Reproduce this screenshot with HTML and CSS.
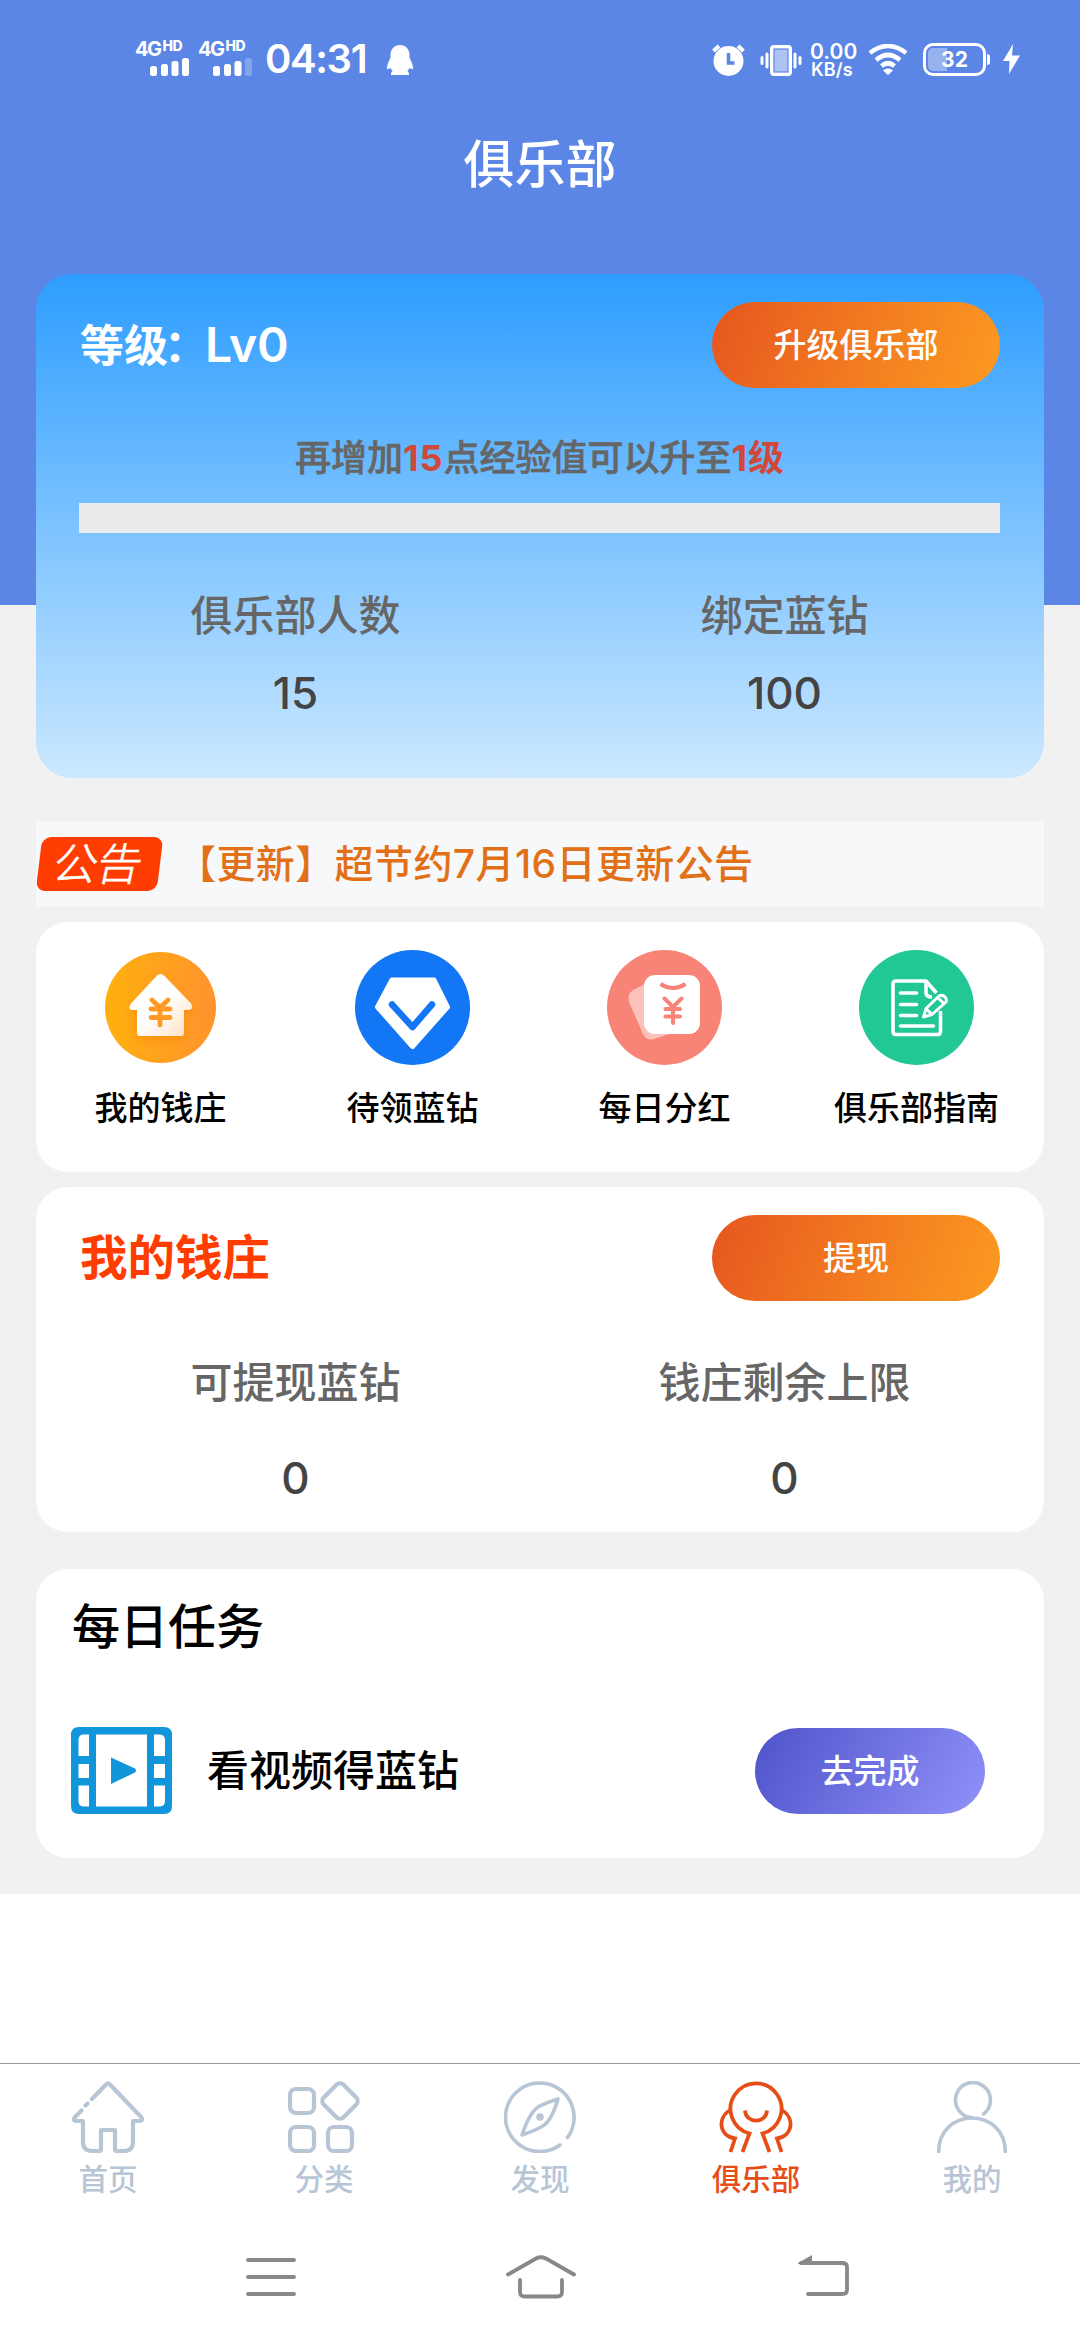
FILE: index.html
```html
<!DOCTYPE html>
<html lang="zh-CN">
<head>
<meta charset="utf-8">
<title>俱乐部</title>
<link rel="stylesheet" href="styles.css">
</head>
<body>
<div class="phone">
  <main class="page">
    <div class="status">
      <div class="status-left">
        <div class="signal">
          <div class="net">4G<sup>HD</sup></div>
          <svg class="bars" width="40" height="18" viewBox="0 0 40 18"><rect x="0" y="8" width="7" height="10" rx="2.5"/><rect x="11" y="6" width="7" height="12" rx="2.5"/><rect x="21.500" y="3" width="7" height="15" rx="2.500"/><rect x="32" y="0" width="7" height="18" rx="2.500"/></svg>
        </div>
        <div class="signal">
          <div class="net">4G<sup>HD</sup></div>
          <svg class="bars" width="40" height="18" viewBox="0 0 40 18"><rect x="0" y="8" width="7" height="10" rx="2.500"/><rect x="11" y="6" width="7" height="12" rx="2.500"/><rect x="21.500" y="3" width="7" height="15" rx="2.500"/><rect x="32" y="0" width="7" height="18" rx="2.500" opacity=".25"/></svg>
        </div>
        <div class="clock">04:31</div>
        <svg class="penguin" width="26" height="30" viewBox="0 0 26 30"><path d="M13 0C7.500 0 3.500 4 3.500 10L3.500 13C1.500 16 0 20 0 24.500L3.500 23L5.500 26.500L4 28V30H22V28L20.500 26.500L22.500 23L26 24.500C26 20 24.500 16 22.500 13V10C22.500 4 18.500 0 13 0Z"/></svg>
      </div>
      <div class="status-right">
        <svg width="33" height="33" viewBox="0 0 33 33"><circle cx="16.500" cy="18" r="15"/><path d="M1.500 8L7 3M31.500 8L26 3" stroke="#fff" stroke-width="4"/><path d="M16.500 10V20H22.500" fill="none" stroke="#5b86e5" stroke-width="3.500"/></svg>
        <svg class="vibrate" width="42" height="31" viewBox="0 0 42 31"><rect x="12" y="2" width="18" height="27" rx="2" fill="#adc3f2" stroke="#fff" stroke-width="4"/><rect x="14" y="4" width="14" height="23" fill="none" stroke="#5b86e5" stroke-width="1.200"/><path d="M7 9V22M35 9V22M2 12.500V18.500M40 12.500V18.500" stroke="#fff" stroke-width="3" stroke-linecap="round"/></svg>
        <div class="speed"><span>0.00</span><span>KB/s</span></div>
        <svg class="wifi" width="40" height="31" viewBox="0 0 40 31"><path d="M2 9Q20-5 38 9M8 16Q20 6 32 16M13.500 22Q20 16.500 26.500 22" fill="none" stroke="#fff" stroke-width="4.600"/><path d="M15 26.500Q20 22.500 25 26.500L20 31Z"/></svg>
        <div class="battery"><span>32</span></div>
        <svg class="bolt" width="17" height="30" viewBox="0 0 17 30"><path d="M10 0L0 17H6.500L6 30L17 11.500H9Z"/></svg>
      </div>
    </div>
    <h1 class="title">俱乐部</h1>

    <section class="card level">
      <div class="card-head">
        <div class="level-name">等级<span class="colon">：</span><span class="lv">Lv0</span></div>
        <button class="pill orange">升级俱乐部</button>
      </div>
      <p class="hint">再增加<em>15</em>点经验值可以升至<em>1级</em></p>
      <div class="progress"></div>
      <div class="stats">
        <div class="stat"><span class="stat-label">俱乐部人数</span><span class="stat-value">15</span></div>
        <div class="stat"><span class="stat-label">绑定蓝钻</span><span class="stat-value">100</span></div>
      </div>
    </section>

    <section class="notice">
      <div class="badge"><span>公告</span></div>
      <p class="notice-text">【更新】超节约7月16日更新公告</p>
    </section>

    <section class="card shortcuts">
      <div class="shortcut">
        <div class="shortcut-icon">
          <svg width="111" height="111" viewBox="0 0 111 111">
            <defs><linearGradient id="gold"><stop offset="0" stop-color="#ffb00e"/><stop offset="1" stop-color="#ff932e"/></linearGradient><linearGradient id="house" x1="0" y1="0" x2="1" y2="1"><stop offset=".5" stop-color="#fff"/><stop offset="1" stop-color="#ffdfc0"/></linearGradient><filter id="soft" x="-30%" y="-30%" width="160%" height="160%"><feDropShadow dx="0" dy="4" stdDeviation="4" flood-color="#f57c00" flood-opacity=".45"/></filter></defs>
            <circle cx="55.500" cy="55.500" r="55.500" fill="url(#gold)"/>
            <path d="M52 23.500Q55.500 20.500 59 23.500L86 51.500Q89 57.500 83 58H79V81Q79 84 76 84H35Q32 84 32 81V58H28Q22 57.500 26 51.500Z" fill="url(#house)" filter="url(#soft)"/>
            <path d="M47 48L55 55.500L63 48M55 55V73M46 57H65M46 65.500H65" fill="none" stroke="#ff9a26" stroke-width="4.800" stroke-linecap="round" stroke-linejoin="round"/>
          </svg>
        </div>
        <span>我的钱庄</span>
      </div>
      <div class="shortcut">
        <div class="shortcut-icon">
          <svg width="115" height="115" viewBox="0 0 115 115"><circle cx="57.500" cy="57.500" r="57.500" fill="#1376f5"/><path d="M37 30H79L92.500 57L57.500 96.500L22.500 57Z" fill="#fff" stroke="#fff" stroke-width="5" stroke-linejoin="round"/><path d="M37 54.500L57.500 77L77 54.500" fill="none" stroke="#1376f5" stroke-width="6.500" stroke-linecap="round" stroke-linejoin="round"/></svg>
        </div>
        <span>待领蓝钻</span>
      </div>
      <div class="shortcut">
        <div class="shortcut-icon">
          <svg width="115" height="115" viewBox="0 0 115 115"><circle cx="57.500" cy="57.500" r="57.500" fill="#f78477"/><path d="M38 34L28 39Q19 43 22.500 53L36 84Q39 91 47 89L62 84Z" fill="#fbc1bb"/><rect x="37" y="25" width="56" height="59" rx="11" fill="#fff"/><path d="M53.500 34Q66 42 78.500 34" fill="none" stroke="#f78477" stroke-width="4"/><path d="M57.500 48.500L66 57L74.500 48.500M66 57V73M58.500 59H73M58.500 66.500H73" fill="none" stroke="#f78477" stroke-width="4" stroke-linecap="round"/></svg>
        </div>
        <span>每日分红</span>
      </div>
      <div class="shortcut">
        <div class="shortcut-icon">
          <svg width="115" height="115" viewBox="0 0 115 115"><circle cx="57.500" cy="57.500" r="57.500" fill="#22c796"/><g fill="none" stroke="#fff" stroke-width="3.600" stroke-linejoin="round"><path d="M77.500 43L67 31H37Q34 31 34 34V81Q34 84.500 37 84.500H79Q81.500 84.500 81.500 81V61"/><path d="M67 31V43Q67.500 47 73 47"/><path d="M41.500 43H57.500M41.500 54.500H57.500M41.500 65.500H57.500M41.500 76H74.500" stroke-linecap="round"/><path d="M64.500 67L67 58.500L80 46Q83 44.500 85.500 46.500Q88.500 49 87 52L73 64.500ZM67 58.500L73 64.500M78.500 47.500L85 53.500" stroke-width="3"/></g></svg>
        </div>
        <span>俱乐部指南</span>
      </div>
    </section>

    <section class="card bank">
      <div class="card-head">
        <h2 class="bank-title">我的钱庄</h2>
        <button class="pill orange">提现</button>
      </div>
      <div class="stats">
        <div class="stat"><span class="stat-label">可提现蓝钻</span><span class="stat-value">0</span></div>
        <div class="stat"><span class="stat-label">钱庄剩余上限</span><span class="stat-value">0</span></div>
      </div>
    </section>

    <section class="card tasks">
      <h2 class="tasks-title">每日任务</h2>
      <div class="task">
        <svg width="101" height="87" viewBox="0 0 101 87"><path fill="#1296db" fill-rule="evenodd" d="M8 0H93Q101 0 101 8V79Q101 87 93 87H8Q0 87 0 79V8Q0 0 8 0ZM25 7.500V79.500H76V7.500ZM18 7.500H12Q7.500 8 7.500 13V29H18ZM7.500 37V51H18V37ZM7.500 58.500V74Q7.500 79 12 79.500H18V58.500ZM83 7.500V29H94V13Q94 8 89 7.500ZM83 37V51H94V37ZM83 58.500V79.500H89Q94 79 94 74V58.500Z"/><path d="M40 30.500L64 41.500Q66 43.500 64 45.500L40 57Z" fill="#1296db"/></svg>
        <span class="task-name">看视频得蓝钻</span>
        <button class="pill violet">去完成</button>
      </div>
    </section>
  </main>

  <nav class="tabs">
    <a class="tab"><svg viewBox="0 0 72 72"><path d="M20 18L34 3.500Q36 1 38 3.500L69.500 36.500Q71 39.500 68 40H61V61Q61 70 52 70H45Q43 70 43 68V49H29V68Q29 70 27 70H20Q11 70 11 61V40H4Q.500 39.500 3 36L9.500 29.500M13.500 24.500L15.500 22.500"/></svg><span>首页</span></a>
    <a class="tab"><svg viewBox="0 0 72 72"><rect x="2" y="8" width="24" height="24" rx="6"/><rect x="2" y="46" width="24" height="24" rx="6"/><rect x="40" y="46" width="24" height="24" rx="6"/><rect x="38" y="6" width="28" height="28" rx="5" transform="rotate(45 52 20)"/></svg><span>分类</span></a>
    <a class="tab"><svg viewBox="0 0 72 72" class="fine"><path d="M56 64A34.300 34.300 0 1 1 63.500 56.500"/><path d="M18 54C22 42 27 31 34 26Q41 22 54 18C50 31 46 41 38 45.500Q30 50 18 54Z"/><circle cx="36" cy="36" r="2" fill="#b7c5d5"/></svg><span>发现</span></a>
    <a class="tab active"><svg viewBox="0 0 72 72"><path d="M22.500 71L29.500 52.500A25.500 25.500 0 1 1 42.500 52.500L49.500 71"/><path d="M10 29C-3 37-1 55 15 57.500L10.500 71M62 29C75 37 73 55 57 57.500L61.500 71M25 29.500C26 43 46 43 47 29.500"/></svg><span>俱乐部</span></a>
    <a class="tab"><svg viewBox="0 0 72 72" class="fine"><path d="M2.700 70.500C2.700 50 18 37 36 37S69.300 50 69.300 70.500M36 36.500A17.500 17.500 0 1 1 47.500 33"/></svg><span>我的</span></a>
  </nav>

  <div class="system">
    <svg width="50" height="44" viewBox="0 0 50 44"><path d="M2 5H48M2 22H48M2 39H48"/></svg>
    <svg class="home" width="70" height="44" viewBox="0 0 70 44"><path d="M2 19.500L30 3.500Q35 1 40 3.500L68 19.500M14 25V37Q14 41.500 19 41.500H51Q56 41.500 56 37V25"/></svg>
    <svg width="52" height="44" viewBox="0 0 52 44"><path d="M3 8H44Q49 8 49 12V35Q49 39 44 39H10"/><path class="head" d="M0 8L14 0V9H0Z"/></svg>
  </div>
</div>
</body>
</html>
```
FILE: styles.css
```css
* { box-sizing: border-box; }
body {
  margin: 0;
  background: #fff;
  font-family: Inter, "Noto Sans CJK SC", sans-serif;
}
h1, h2, p { margin: 0; font-weight: 400; }
svg { display: block; flex: none; }
.phone { width: 1080px; height: 2340px; display: flex; flex-direction: column; }

.page {
  height: 1894px;
  padding: 0 36px;
  background: linear-gradient(#5b86e5 605px, #f1f1f1 605px);
}

.status { height: 120px; display: flex; justify-content: space-between; color: #fff; }
.status svg { fill: #fff; }
.status-left { display: flex; padding-left: 99px; }
.signal { width: 63px; padding-top: 41px; }
.net { height: 17px; font-size: 20px; font-weight: 700; line-height: 17px; letter-spacing: -1.5px; display: flex; }
.net sup { font-size: 14px; font-weight: 800; line-height: 10px; letter-spacing: -.5px; margin-left: 2px; }
.bars { margin-left: 15px; }
.clock { width: 126px; padding-left: 4px; font-size: 40px; font-weight: 600; line-height: 118px; letter-spacing: -1.4px; }
.penguin { margin-top: 45px; }
.status-right { display: flex; padding: 43px 24px 0 0; }
.vibrate { margin: 2px 0 0 15px; }
.speed { width: 48px; margin-left: 8px; display: flex; flex-direction: column; gap: 2px; font-weight: 600; font-size: 21px; line-height: 17px; letter-spacing: .1px; }
.speed span + span { font-size: 18px; line-height: 16px; padding-left: 1px; letter-spacing: .1px; }
.wifi { margin: 1px 0 0 10px; }
.battery {
  position: relative;
  width: 63px; height: 33px;
  margin-left: 15px;
  border: 3px solid #fff;
  border-radius: 10px;
  background: linear-gradient(90deg, #97b3ef 19px, transparent 19px) content-box;
  padding: 2px;
  font-size: 21px; font-weight: 700; line-height: 24px; text-align: center;
}
.battery::after {
  content: "";
  position: absolute; right: -7px; top: 8px;
  width: 3px; height: 11px;
  background: #fff;
  border-radius: 0 3px 3px 0;
}
.bolt { margin: 1px 0 0 17px; }

.title { height: 154px; line-height: 89px; text-align: center; font-size: 51px; font-weight: 500; color: #fff; }

.card { background: #fff; border-radius: 32px; }
.card-head { display: flex; align-items: center; justify-content: space-between; padding: 0 44px; }
.pill {
  width: 288px; height: 86px;
  border: 0; border-radius: 43px; padding: 0;
  color: #fff;
  font: 500 33px/86px Inter, "Noto Sans CJK SC", sans-serif;
}
.orange { background: linear-gradient(110deg, #e6561f, #f37d20 55%, #fc9a21); }
.violet { width: 230px; background: linear-gradient(120deg, #4f53c9, #9091fa); }

.level { height: 504px; padding-top: 28px; border-radius: 36px; background: linear-gradient(#2d9dff, #cbe8ff); }
.level-name { font-size: 44px; font-weight: 700; line-height: 60px; color: #fff; }
.colon { margin-left: -4px; }
.lv { font-size: 48px; font-weight: 600; margin-left: -3px; }
.hint { margin-top: 49px; font-size: 36px; font-weight: 500; line-height: 43px; text-align: center; color: #666; -webkit-text-stroke: .6px #666; }
.hint em { font-style: normal; font-weight: 700; letter-spacing: 1px; color: #d0483a; -webkit-text-stroke: 0; }
.progress { height: 30px; margin: 23px 44px 0 43px; background: #ebebeb; }
.stats { display: flex; padding: 0 15px; margin-top: 58px; }
.stat { flex: 1; display: flex; flex-direction: column; align-items: center; gap: 26px; }
.stat-label { font-size: 42px; font-weight: 500; line-height: 50px; color: #666; }
.stat-value { font-size: 44px; font-weight: 500; line-height: 52px; color: #444; }

.notice { height: 86px; margin: 43px 0 15px; display: flex; align-items: center; background: #f7f8fa; }
.badge {
  width: 121px; height: 54px;
  margin: 0 17px 0 3px;
  display: flex; align-items: center; justify-content: center;
  border-radius: 9px;
  background: #ff3d00;
  transform: skewX(-7deg);
  color: #fff;
}
.badge span { font-size: 44px; font-weight: 300; line-height: 54px; -webkit-text-stroke: .7px #fff; transform: translateX(-2px) skewX(-5deg); }
.notice-text { font-size: 39px; font-weight: 500; line-height: 50px; letter-spacing: .4px; color: #e27018; }

.shortcuts { height: 250px; padding-top: 28px; display: flex; }
.shortcut { flex: 1; padding-right: 3px; display: flex; flex-direction: column; align-items: center; gap: 23px; font-size: 33px; font-weight: 500; line-height: 40px; color: #000; }
.shortcut-icon { height: 115px; display: flex; align-items: center; }

.bank { height: 345px; margin-top: 15px; padding-top: 28px; }
.bank .stats { margin-top: 57px; }
.bank .stat { gap: 44px; }
.bank-title { font-size: 47.5px; font-weight: 700; line-height: 60px; color: #ff3d00; }

.tasks { height: 289px; margin-top: 37px; padding: 28px 59px 0 35px; }
.tasks-title { padding-left: 1px; font-size: 48px; font-weight: 500; line-height: 60px; color: #000; }
.task { margin-top: 70px; display: flex; align-items: center; }
.task-name { flex: 1; padding-left: 35px; font-size: 42px; font-weight: 500; line-height: 60px; color: #000; }

.tabs { height: 148px; margin-top: 169px; padding-top: 17px; display: flex; border-top: 1px solid #999; }
.tab { flex: 1; display: flex; flex-direction: column; align-items: center; gap: 6px; font-size: 29.5px; line-height: 40px; color: #b7c5d5; }
.tab svg { width: 72px; height: 72px; fill: none; stroke: currentColor; stroke-width: 4.2; stroke-linecap: round; stroke-linejoin: round; }
.tab .fine { stroke-width: 3.6; }
.tab span { font-weight: 500; }
.tab.active { color: #e64e18; }
.tab.active svg { overflow: visible; stroke-linecap: butt; stroke-linejoin: miter; stroke-width: 3.8; }

.system { flex: 1; display: flex; padding: 44px 0 0 246px; }
.system svg { fill: none; stroke: #888; stroke-width: 3.8; stroke-linecap: round; }
.home { margin: 0 222px 0 210px; }
.system .head { fill: #888; stroke: none; }
```
